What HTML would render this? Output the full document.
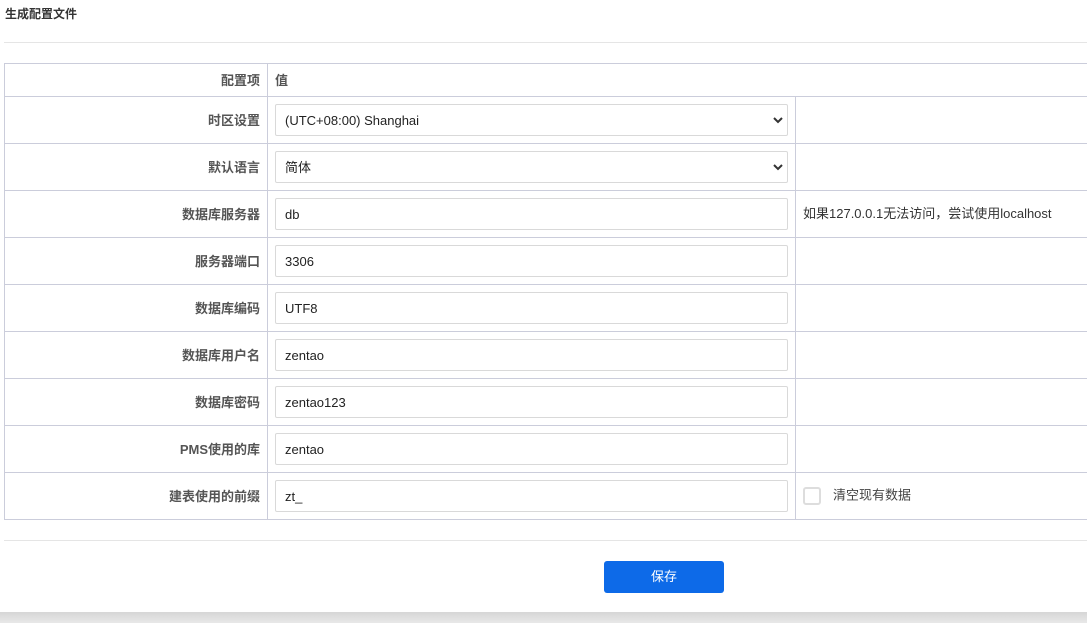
<!DOCTYPE html>
<html><head><meta charset="utf-8"><style>
*{box-sizing:border-box;margin:0;padding:0}
body{width:1087px;height:623px;background:#fff;font-family:"Liberation Sans","Noto Sans CJK SC",sans-serif;font-size:13px;color:#333;position:relative;overflow:hidden}
.title{position:absolute;left:5px;top:5px;font-size:12px;font-weight:bold;color:#333}
.hl{position:absolute;left:4px;right:0;height:1px;background:#e5e5e5}
.tbl{position:absolute;left:4px;top:63px;width:1090px;border-collapse:collapse}
.tbl td{border:1px solid #cbcddb;height:47px;vertical-align:middle;line-height:16px}
.tbl tr:first-child td{height:33px}
.tbl td.l{width:263px;text-align:right;padding-right:7px;padding-top:1px;font-weight:bold;color:#555;font-size:13px}
.tbl td.v{width:528px;padding-left:7px}
.tbl td.n{padding-left:7px;font-size:13px;color:#333;padding-bottom:1px}
.inp{width:513px;height:32px;border:1px solid #d9d9d9;border-radius:2px;padding-left:9px;line-height:31px;font-size:13px;color:#222;position:relative}
.chev{position:absolute;right:4px;top:11px}
.cb{display:inline-block;width:18px;height:18px;border:2px solid #ddd;border-radius:3px;vertical-align:middle;margin-right:12px}
.btn{position:absolute;left:604px;top:561px;width:120px;height:32px;background:#0d6ae8;border-radius:3px;color:#fff;text-align:center;line-height:32px;font-size:13px}
.bar{position:absolute;left:0;right:0;top:612px;height:11px;background:linear-gradient(#d6d6d6,#e8e8e8)}
</style></head><body>
<div class="title">生成配置文件</div>
<div class="hl" style="top:42px"></div>
<table class="tbl">
<tr><td class="l">配置项</td><td class="v" colspan="2" style="font-weight:bold;color:#555;padding-top:1px">值</td></tr>
<tr><td class="l">时区设置</td><td class="v"><div class="inp">(UTC+08:00) Shanghai<svg class="chev" width="10" height="8" viewBox="0 0 10 8"><path d="M1 2l4 4 4-4" stroke="#333" stroke-width="2" fill="none"/></svg></div></td><td class="n"></td></tr>
<tr><td class="l">默认语言</td><td class="v"><div class="inp">简体<svg class="chev" width="10" height="8" viewBox="0 0 10 8"><path d="M1 2l4 4 4-4" stroke="#333" stroke-width="2" fill="none"/></svg></div></td><td class="n"></td></tr>
<tr><td class="l">数据库服务器</td><td class="v"><div class="inp">db</div></td><td class="n">如果127.0.0.1无法访问，尝试使用localhost</td></tr>
<tr><td class="l">服务器端口</td><td class="v"><div class="inp">3306</div></td><td class="n"></td></tr>
<tr><td class="l">数据库编码</td><td class="v"><div class="inp">UTF8</div></td><td class="n"></td></tr>
<tr><td class="l">数据库用户名</td><td class="v"><div class="inp">zentao</div></td><td class="n"></td></tr>
<tr><td class="l">数据库密码</td><td class="v"><div class="inp">zentao123</div></td><td class="n"></td></tr>
<tr><td class="l">PMS使用的库</td><td class="v"><div class="inp">zentao</div></td><td class="n"></td></tr>
<tr><td class="l">建表使用的前缀</td><td class="v"><div class="inp">zt_</div></td><td class="n" style="color:#444"><span class="cb"></span>清空现有数据</td></tr>
</table>
<div class="hl" style="top:540px"></div>
<div class="btn">保存</div>
<div class="bar"></div>
</body></html>
